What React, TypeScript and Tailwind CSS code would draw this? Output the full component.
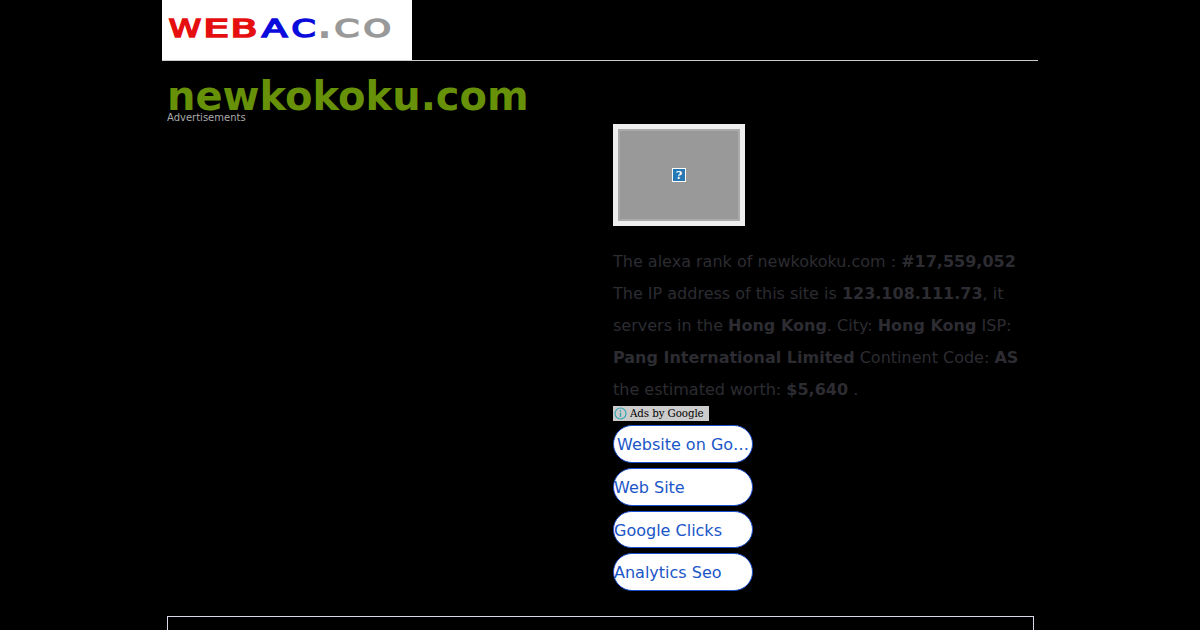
import React from "react";

type Glyph = { char: string; x: number; width: number; color: string };

const logo: Glyph[] = [
	{ char: "W", x: 6.8, width: 32.4, color: "#e60f0f" },
	{ char: "E", x: 41.2, width: 25.8, color: "#e60f0f" },
	{ char: "B", x: 68.4, width: 27, color: "#e60f0f" },
	{ char: "A", x: 99.7, width: 25.6, color: "#0b0bdc" },
	{ char: "C", x: 129.4, width: 24, color: "#0b0bdc" },
	{ char: ".", x: 155.6, width: 14, color: "#999999" },
	{ char: "C", x: 172.4, width: 24.6, color: "#999999" },
	{ char: "O", x: 201.4, width: 27.4, color: "#999999" },
];

const adLinks = [
	{ label: "Website on Go…", className: "h-[38px] mb-[5px] pl-[3px] pt-px" },
	{ label: "Web Site", className: "h-[38px] mb-[5px] pt-px" },
	{ label: "Google Clicks", className: "h-[37px] mb-[5px] pt-[2px]" },
	{ label: "Analytics Seo", className: "h-[38px] pt-px" },
];

function Logo() {
	return (
		<svg width="250" height="60" viewBox="0 0 250 60" className="block bg-white">
			{logo.map((g) => {
				const dot = g.char === ".";
				return (
					<text
						key={g.x}
						x={g.x}
						y={dot ? 38 : 37.3}
						fontSize={dot ? 36 : 24.5}
						fontWeight={dot ? 700 : 400}
						fontFamily="DejaVu Sans, sans-serif"
						textLength={g.width}
						lengthAdjust="spacingAndGlyphs"
						fill={g.color}
						stroke={g.color}
						strokeWidth={dot ? 0 : 1.6}
					>
						{g.char}
					</text>
				);
			})}
		</svg>
	);
}

function Thumbnail() {
	return (
		<div className="flex h-[102px] w-[132px] items-center justify-center border-5 border-[#eeeeee] bg-[#999999]">
			<div className="flex h-full w-full items-center justify-center border-2 border-[#aaaaaa]">
				<svg width="14" height="14" viewBox="0 0 14 14">
					<rect x="0.5" y="0.5" width="13" height="13" fill="#2878b4" stroke="#ffffff" />
					<text
						x="7"
						y="11"
						textAnchor="middle"
						fontSize="11"
						fontWeight="700"
						fontFamily="DejaVu Serif, serif"
						fill="#ffffff"
					>
						?
					</text>
				</svg>
			</div>
		</div>
	);
}

function AdsByGoogle() {
	return (
		<div>
			<div className="flex h-[15px] w-24 items-center bg-[#cccccc] pl-px">
				<svg width="13" height="13" viewBox="0 0 13 13" fill="none" stroke="#32a5b4">
					<circle cx="6.5" cy="6.5" r="5.5" strokeWidth="1.2" />
					<path d="M6.5 5.5v4.5M6.5 3v1.5" strokeWidth="1.4" />
				</svg>
				<span className="ml-[3px] font-['DejaVu_Serif',serif] text-[10.3px] leading-[15px] tracking-[-0.1px] whitespace-nowrap text-black">
					Ads by Google
				</span>
			</div>
			<ul className="mt-1 w-[140px]">
				{adLinks.map((link) => (
					<li
						key={link.label}
						className={`flex items-center rounded-full border border-[#1a4fcf] bg-white text-[#1a56c8] ${link.className}`}
					>
						<a className="block text-base whitespace-nowrap">{link.label}</a>
					</li>
				))}
			</ul>
		</div>
	);
}

function App() {
	return (
		<div className="h-[630px] overflow-hidden bg-black font-['DejaVu_Sans',sans-serif]">
			<div className="mx-auto w-[876px]">
				<header className="border-b border-[#cccccc]">
					<Logo />
				</header>
				<main className="px-[5px] pt-[15px]">
					<h1 className="h-9 text-[40px] leading-10 font-bold text-[#669108]">newkokoku.com</h1>
					<p className="h-3 text-[10px] leading-3 text-[#aaaaaa]">Advertisements</p>
					<div className="ml-[446px] h-[492px] w-[410px]">
						<Thumbnail />
						<p className="mt-5 text-base leading-8 text-[#2c2c32]">
							The alexa rank of newkokoku.com : <strong>#17,559,052</strong>
							<br />
							The IP address of this site is <strong>123.108.111.73</strong>, it servers in the{" "}
							<strong>Hong Kong</strong>. City: <strong>Hong Kong</strong> ISP:{" "}
							<strong>Pang International Limited</strong> Continent Code: <strong>AS</strong> the
							estimated worth: <strong>$5,640</strong> .
						</p>
						<AdsByGoogle />
					</div>
					<div className="h-10 w-[867px] border border-[#ddd5e8]" />
				</main>
			</div>
		</div>
	);
}

export default App;
